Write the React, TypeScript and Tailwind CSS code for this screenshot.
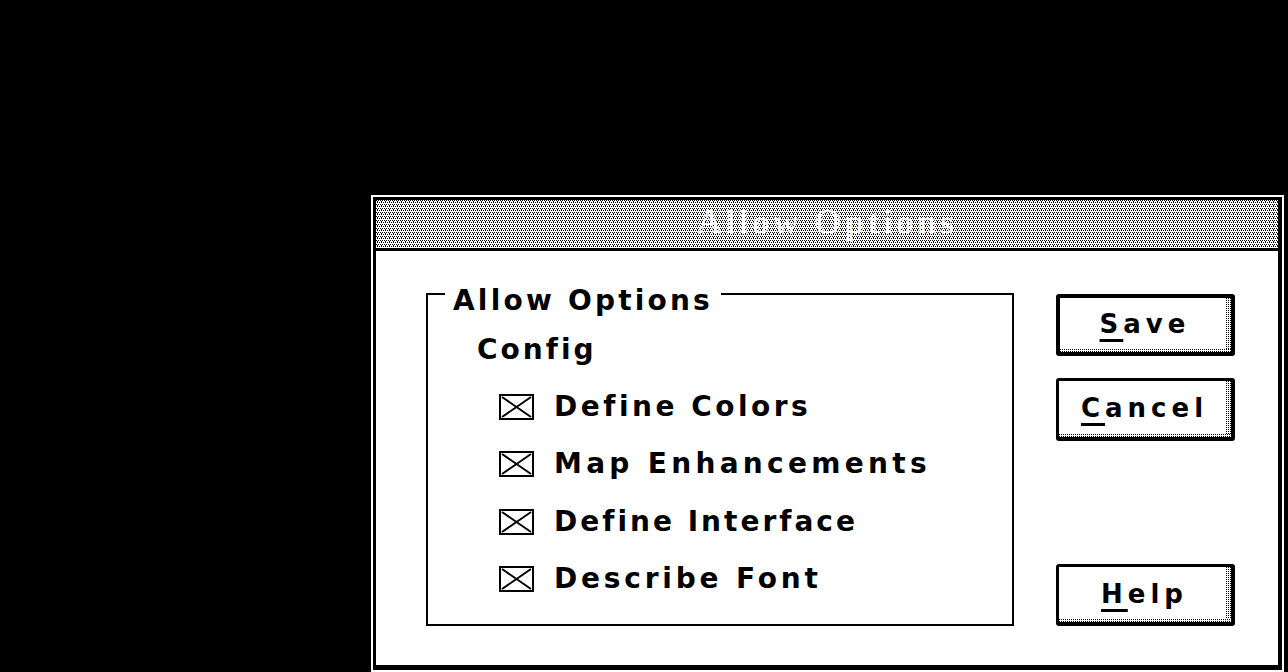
import React, { useId } from "react";

type DitherProps = {
  className?: string;
  w?: number;
  h?: number;
  dots?: [number, number][];
  bg?: string;
};

function Dither({ className = "", w = 2, h = 4, dots = [[0, 0], [1, 2]], bg = "white" }: DitherProps) {
  const id = "p" + useId().replace(/[^a-zA-Z0-9]/g, "");
  return (
    <div className={`relative ${className}`} aria-hidden="true">
      <svg className="absolute inset-0 h-full w-full" shapeRendering="crispEdges">
        <defs>
          <pattern id={id} width={w} height={h} patternUnits="userSpaceOnUse">
            {bg !== "none" && <rect width={w} height={h} fill={bg} />}
            {dots.map(([x, y], i) => (
              <rect key={i} x={x} y={y} width={1} height={1} fill="black" />
            ))}
          </pattern>
        </defs>
        <rect width="100%" height="100%" fill={`url(#${id})`} />
      </svg>
    </div>
  );
}

function CheckBox() {
  return (
    <svg width="35" height="26" viewBox="0 0 35 26" shapeRendering="crispEdges" className="shrink-0">
      <rect x="1" y="1" width="33" height="24" fill="white" stroke="black" strokeWidth="2" />
      <path d="M3 3 L32 23 M32 3 L3 23" stroke="black" strokeWidth="2" fill="none" shapeRendering="auto" />
    </svg>
  );
}

function Button({ u, rest, def = false, h }: { u: string; rest: string; def?: boolean; h: string }) {
  return (
    <div className={`${h} w-[179px] shrink-0 bg-black ${def ? "p-[4px]" : "pb-[4px] pl-[3px] pr-[4px] pt-[3px]"} rounded-[3px]`}>
      <div className="flex h-full flex-col bg-white">
        <div className="flex min-h-0 flex-1">
          <div className="flex flex-1 items-center justify-center pl-[4px] pt-[1px] text-[26px] font-bold leading-[30px] tracking-[5px] text-black">
            <span>
              <span className="underline decoration-[3px] underline-offset-[6px]">{u}</span>
              {rest}
            </span>
          </div>
          <Dither className="w-[5px] shrink-0" w={2} h={2} dots={[[0, 0]]} />
        </div>
        <Dither className="h-[3px] w-full shrink-0" w={2} h={2} dots={[[0, 0]]} />
      </div>
    </div>
  );
}

function Item({ text, ls = "tracking-[3.5px]" }: { text: string; ls?: string }) {
  return (
    <div className="flex h-[57px] items-center pl-[71px]">
      <CheckBox />
      <span className={`ml-[20px] text-[28px] font-bold ${ls}`}>{text}</span>
    </div>
  );
}

export default function App() {
  return (
    <div
      className="h-[672px] w-[1288px] overflow-hidden bg-black pl-[371px] pt-[195px] text-black"
      style={{ fontFamily: '"DejaVu Sans", "Liberation Sans", sans-serif' }}
    >
      <div className="h-[477px] w-[913px] border-2 border-white bg-white">
        <div className="flex h-full flex-col border-b-[5px] border-l-[3px] border-r-[4px] border-t-[3px] border-black bg-white">
          {/* title bar */}
          <div className="relative flex h-[51px] shrink-0 items-center justify-center overflow-hidden border-b-[3px] border-black">
            <Dither className="!absolute inset-0" w={2} h={4} dots={[[0, 0], [1, 2]]} />
            <span
              className="relative -mt-[2px] text-[35px] font-bold tracking-[3.5px] text-white"
              style={{ fontFamily: '"Liberation Serif", "DejaVu Serif", serif' }}
            >
              Allow Options
            </span>
            <Dither className="!absolute inset-0" w={4} h={4} dots={[[1, 1]]} bg="none" />
          </div>

          {/* body */}
          <div className="flex flex-1 gap-[42px] pl-[50px] pt-[22px]">
            <fieldset className="m-0 h-[353px] w-[588px] border-2 border-black p-0">
              <legend className="ml-[17px] px-[8px] pt-[14px] text-[28px] font-bold leading-[28px] tracking-[3.2px]">
                Allow Options
              </legend>
              <div className="flex flex-col pt-[6px]">
                <div className="flex h-[57px] items-center pl-[49px] text-[28px] font-bold tracking-[3px]">Config</div>
                <Item text="Define Colors" />
                <Item text="Map Enhancements" ls="tracking-[4.3px]" />
                <div className="h-[1px]" />
                <Item text="Define Interface" ls="tracking-[3px]" />
                <Item text="Describe Font" ls="tracking-[3.8px]" />
              </div>
            </fieldset>

            <div className="mt-[21px] flex h-[332px] w-[179px] flex-col justify-between">
              <div className="flex flex-col gap-[22px]">
                <Button def u="S" rest="ave" h="h-[62px]" />
                <Button u="C" rest="ancel" h="h-[63px]" />
              </div>
              <Button u="H" rest="elp" h="h-[62px]" />
            </div>
          </div>
        </div>
      </div>
    </div>
  );
}
